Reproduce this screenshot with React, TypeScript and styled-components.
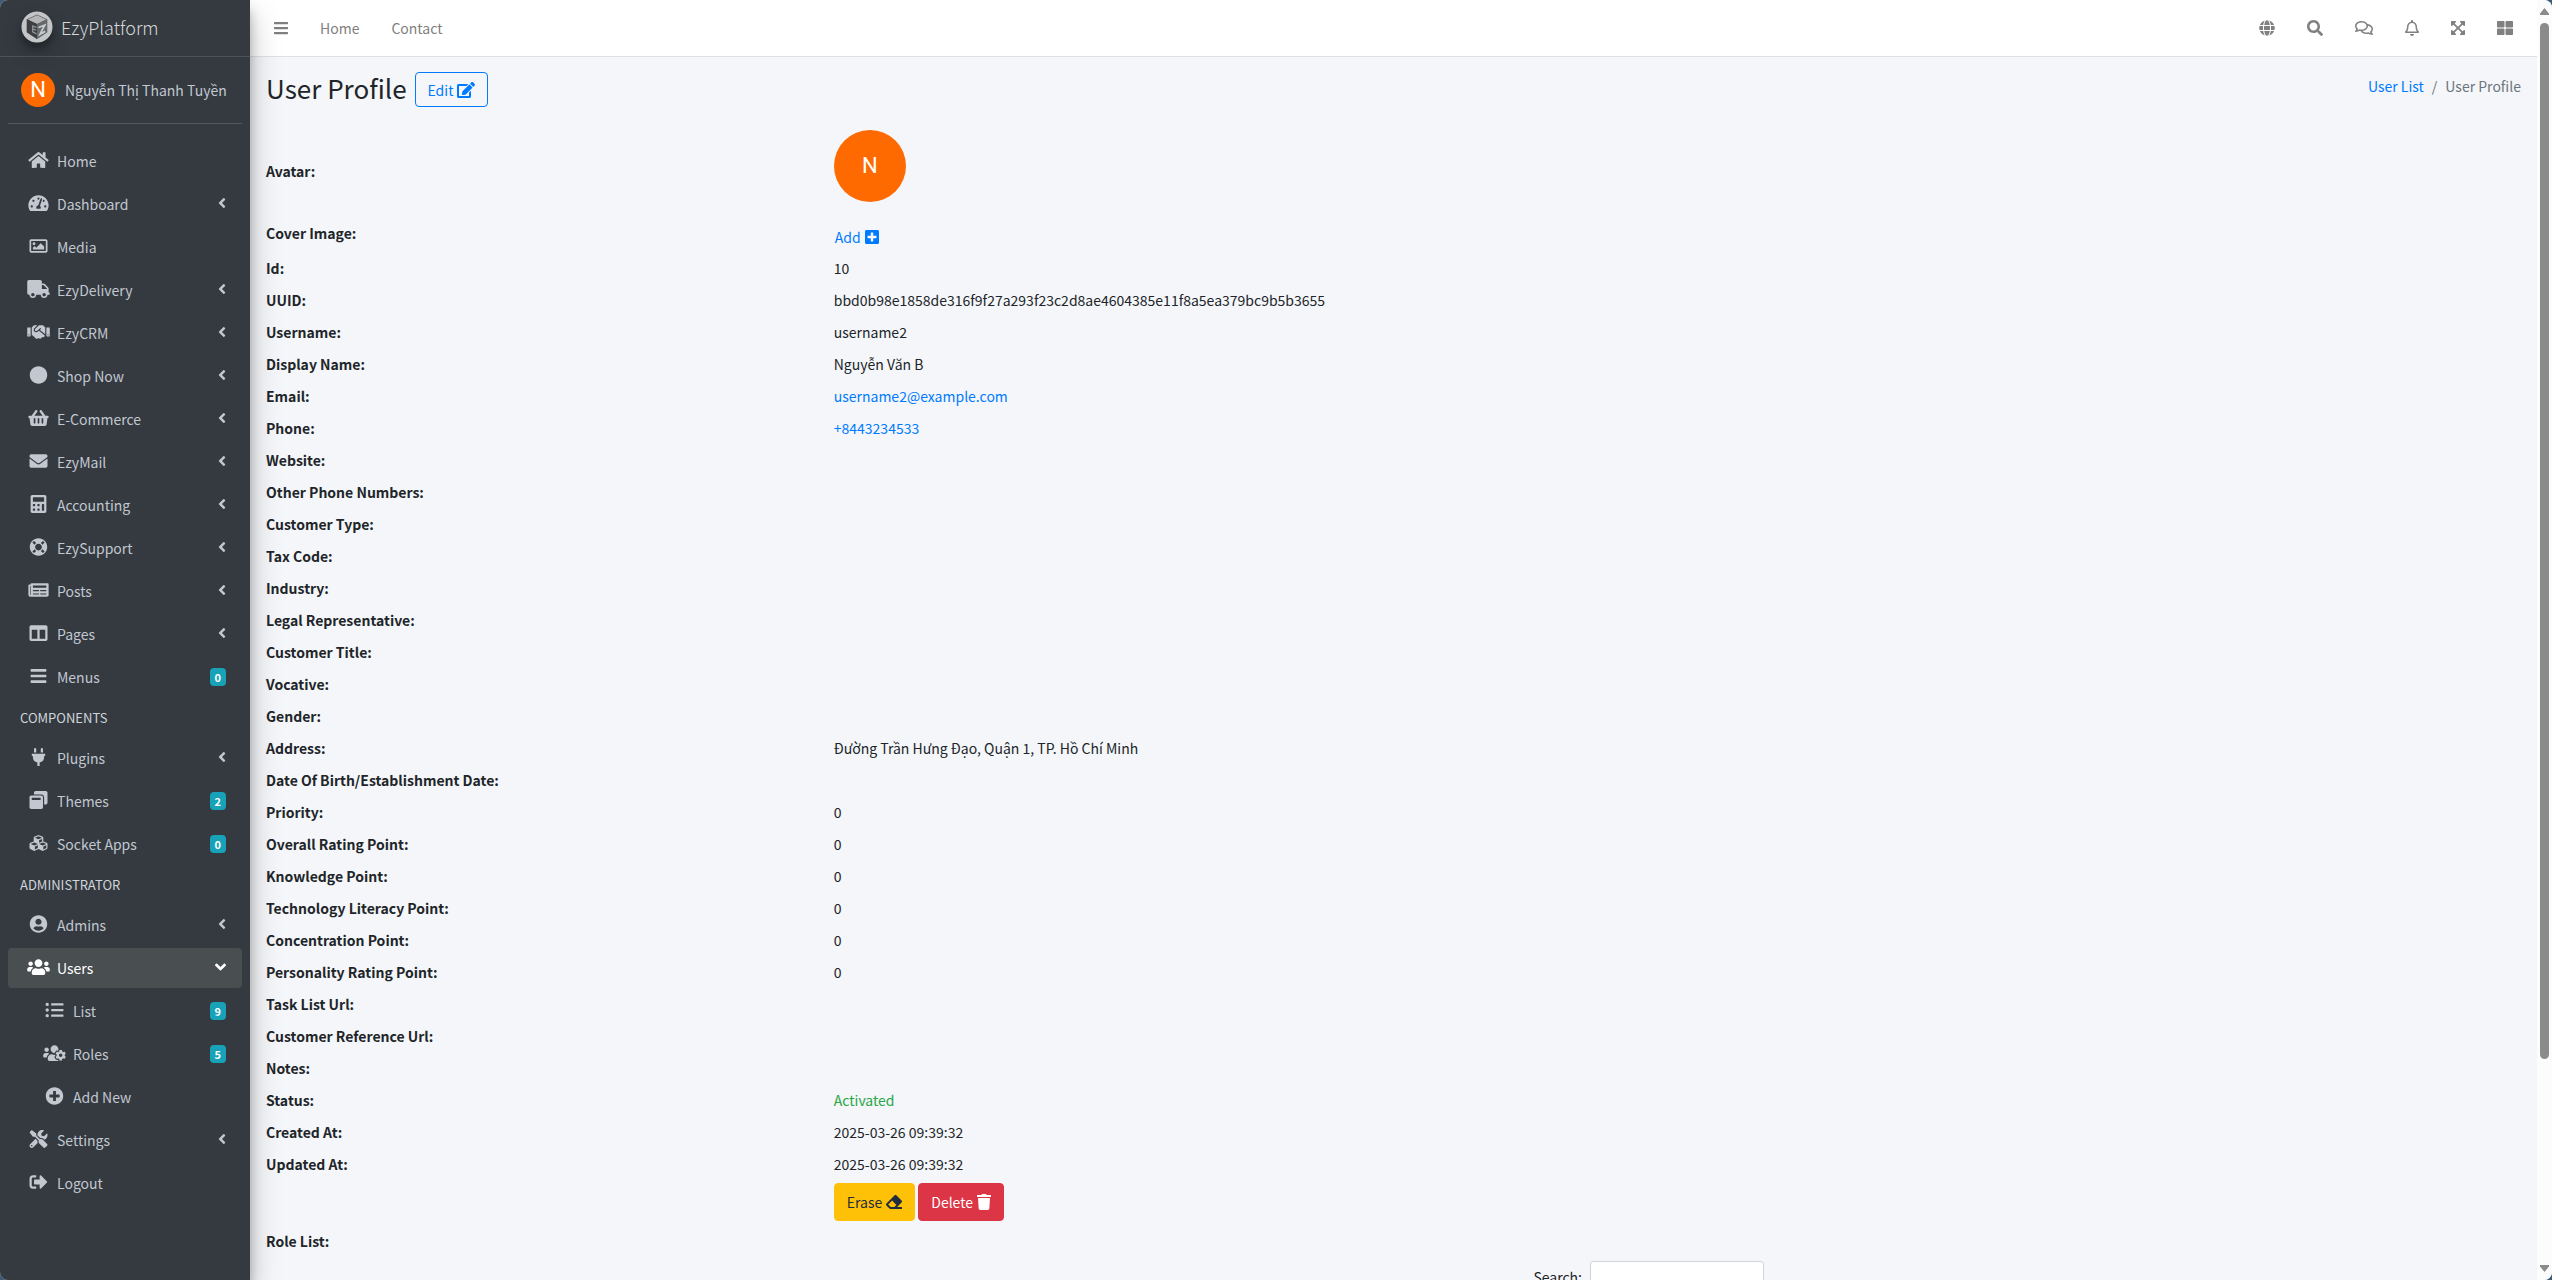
import React from "react";
import styled, { createGlobalStyle, css } from "styled-components";
import {
  FaAngleDown,
  FaAngleLeft,
  FaBars,
  FaCalculator,
  FaCircle,
  FaColumns,
  FaCubes,
  FaEdit,
  FaEnvelope,
  FaEraser,
  FaExpandArrowsAlt,
  FaGlobe,
  FaHandshake,
  FaHome,
  FaLifeRing,
  FaListUl,
  FaNewspaper,
  FaPlug,
  FaPlusCircle,
  FaPlusSquare,
  FaRegBell,
  FaRegComments,
  FaRegImage,
  FaSearch,
  FaShoppingBasket,
  FaSignOutAlt,
  FaTachometerAlt,
  FaThLarge,
  FaTools,
  FaTrash,
  FaTruck,
  FaUserCircle,
  FaUsers,
  FaUsersCog,
  FaWindowRestore,
} from "react-icons/fa";
import type { IconType } from "react-icons";

const GlobalStyle = createGlobalStyle`
  *, *::before, *::after { box-sizing: border-box; }
  body {
    margin: 0;
    background: #3f5a76;
    color: #212529;
    font-family: "Noto Sans CJK SC", "Noto Sans", sans-serif;
    font-size: 14px;
    line-height: 24px;
  }
  a { color: #007bff; text-decoration: none; }
  button, input { font: inherit; }
  svg { display: block; flex: none; }
`;

const Window = styled.div`
  display: flex;
  height: 100vh;
  overflow: hidden;
  border-radius: 8px;
  background: #f4f6f9;
`;

/* ---------- Sidebar ---------- */

const Sidebar = styled.aside`
  position: relative;
  z-index: 2;
  flex: none;
  width: 250px;
  background: #343a40;
  box-shadow: 0 14px 28px rgba(0, 0, 0, 0.25), 0 10px 10px rgba(0, 0, 0, 0.22);
`;

const Brand = styled.a`
  display: flex;
  align-items: center;
  gap: 8px;
  height: 57px;
  padding: 0 21px 3px;
  border-bottom: 1px solid #4b545c;
  color: #d6d8d9;
  font-size: 18px;
  font-weight: 300;

  svg {
    border-radius: 50%;
    box-shadow: 0 10px 20px rgba(0, 0, 0, 0.19), 0 6px 6px rgba(0, 0, 0, 0.23);
  }
`;

const UserPanel = styled.div`
  display: flex;
  align-items: center;
  gap: 10px;
  height: 67px;
  margin: 0 8px;
  padding: 0 13px;
  border-bottom: 1px solid #4f5962;

  a {
    color: #c2c7d0;
    white-space: nowrap;
  }
`;

const Avatar = styled.span<{ $size: number }>`
  display: flex;
  flex: none;
  align-items: center;
  justify-content: center;
  width: ${(p) => p.$size}px;
  height: ${(p) => p.$size}px;
  border-radius: 50%;
  background: #ff6a00;
  color: #fff;
  font-family: Roboto, sans-serif;
  font-size: 22px;
`;

const Menu = styled.ul`
  display: flex;
  flex-direction: column;
  gap: 3px;
  margin: 0;
  padding: 17px 8px 0;
  list-style: none;
`;

const MenuHeader = styled.li`
  height: 35px;
  padding-left: 12px;
  color: #d0d4db;
  font-size: 13px;
  line-height: 35px;
`;

const MenuLink = styled.a<{ $active?: boolean; $nested?: boolean }>`
  display: flex;
  align-items: center;
  gap: 5px;
  height: 40px;
  padding: 0 16px 0 ${(p) => (p.$nested ? 32 : 16)}px;
  border-radius: 4px;
  color: #c2c7d0;
  ${(p) =>
    p.$active &&
    css`
      background: #494e51;
      color: #fff;
    `}
`;

const IconSlot = styled.span`
  display: flex;
  justify-content: center;
  width: 28px;
  padding-bottom: 2px;

  svg {
    width: 23px;
    height: 18px;
  }
`;

const MenuText = styled.span`
  flex: 1;
`;

const Arrow = styled.span<{ $open?: boolean }>`
  padding-bottom: 2px;

  svg {
    width: ${(p) => (p.$open ? 11 : 8)}px;
    height: 18px;
  }
`;

const Badge = styled.span`
  padding: 0 5px;
  border-radius: 4px;
  background: #17a2b8;
  color: #fff;
  font-size: 11px;
  font-weight: 700;
  line-height: 18px;
`;

/* ---------- Main area ---------- */

const Main = styled.div`
  flex: 1;
  min-width: 0;
  overflow: hidden;
`;

const Navbar = styled.nav`
  display: flex;
  justify-content: space-between;
  height: 57px;
  padding: 0 8px;
  border-bottom: 1px solid #dee2e6;
  background: #fff;
`;

const NavGroup = styled.div`
  display: flex;
`;

const navItem = css`
  display: flex;
  align-items: center;
  padding: 0 16px;
  border: 0;
  background: none;
  color: #808080;
`;

const NavLink = styled.a`
  ${navItem}
`;

const NavButton = styled.button<{ $icon: number }>`
  ${navItem}

  svg {
    width: ${(p) => p.$icon}px;
    height: 16px;
  }
`;

const Content = styled.main`
  padding: 0 8px;
`;

const PageHeader = styled.header`
  display: flex;
  justify-content: space-between;
  padding: 15px 8px 0;
  height: 68px;
`;

const TitleGroup = styled.div`
  display: flex;
  align-items: center;
  gap: 8px;
  height: 35px;
`;

const Title = styled.h1`
  margin: 0;
  padding-bottom: 3px;
  font-size: 26px;
  font-weight: 400;
  line-height: 32px;
`;

const Breadcrumb = styled.ol`
  display: flex;
  gap: 8px;
  height: 24px;
  margin: 2px 0 0;
  padding: 0;
  color: #6c757d;
  list-style: none;

  li + li::before {
    content: "/";
    padding-right: 8px;
  }
`;

type Tone = "outline" | "warning" | "danger" | "link";

const tones = {
  outline: css`
    height: 35px;
    padding: 0 12px;
    border-color: #007bff;
    color: #007bff;
  `,
  warning: css`
    background: #ffc107;
    border-color: #ffc107;
    color: #1f2d3d;
  `,
  danger: css`
    background: #dc3545;
    border-color: #dc3545;
    color: #fff;
  `,
  link: css`
    height: 28px;
    padding: 4px 0 0;
    color: #007bff;
  `,
};

const Button = styled.button<{ $tone: Tone; $icon: number }>`
  display: inline-flex;
  align-items: center;
  gap: 4px;
  height: 38px;
  padding: 0 12px;
  border: 1px solid transparent;
  border-radius: 4px;
  background: none;
  ${(p) => tones[p.$tone]}

  svg {
    width: ${(p) => p.$icon}px;
    height: 16px;
  }
`;

const Details = styled.dl`
  margin: 0;
`;

const Row = styled.div<{ $height?: number }>`
  display: grid;
  grid-template-columns: 1fr 3fr;
  height: ${(p) => p.$height ?? 32}px;
  line-height: 32px;
`;

const Term = styled.dt<{ $center?: boolean }>`
  align-self: ${(p) => (p.$center ? "center" : "start")};
  padding: 0 8px;
  font-weight: 700;
`;

const Value = styled.dd<{ $top?: number; $success?: boolean }>`
  display: flex;
  align-items: flex-start;
  gap: 3px;
  margin: 0;
  padding: ${(p) => p.$top ?? 0}px 8px 0;
  color: ${(p) => (p.$success ? "#28a745" : "inherit")};
`;

const RoleHeading = styled.h2`
  margin: 0;
  padding: 0 8px;
  font-size: 14px;
  font-weight: 700;
  line-height: 32px;
`;

const SearchBar = styled.div`
  display: flex;
  justify-content: flex-end;
  width: calc(100% * 2 / 3);
  padding: 4px 8px 0;

  label {
    display: flex;
    align-items: center;
    gap: 8px;
  }
`;

const SearchInput = styled.input`
  width: 174px;
  height: 31px;
  padding: 4px 8px;
  border: 1px solid #ced4da;
  border-radius: 3px;
  background: #fff;
`;

/* ---------- Scroll bar ---------- */

const ScrollTrack = styled.div`
  display: flex;
  flex: none;
  flex-direction: column;
  align-items: center;
  justify-content: space-between;
  width: 15px;
  padding: 8px 0;
  background: #fcfcfc;
`;

const ScrollThumb = styled.span`
  flex: 0 1 82%;
  width: 9px;
  margin: 8px 0 auto;
  border-radius: 5px;
  background: #8b8b8b;
`;

type Item = {
  label: string;
  icon: IconType;
  tail?: "arrow" | "open" | number;
  nested?: boolean;
};

const mainItems: Item[] = [
  { label: "Home", icon: FaHome },
  { label: "Dashboard", icon: FaTachometerAlt, tail: "arrow" },
  { label: "Media", icon: FaRegImage },
  { label: "EzyDelivery", icon: FaTruck, tail: "arrow" },
  { label: "EzyCRM", icon: FaHandshake, tail: "arrow" },
  { label: "Shop Now", icon: FaCircle, tail: "arrow" },
  { label: "E-Commerce", icon: FaShoppingBasket, tail: "arrow" },
  { label: "EzyMail", icon: FaEnvelope, tail: "arrow" },
  { label: "Accounting", icon: FaCalculator, tail: "arrow" },
  { label: "EzySupport", icon: FaLifeRing, tail: "arrow" },
  { label: "Posts", icon: FaNewspaper, tail: "arrow" },
  { label: "Pages", icon: FaColumns, tail: "arrow" },
  { label: "Menus", icon: FaBars, tail: 0 },
];

const componentItems: Item[] = [
  { label: "Plugins", icon: FaPlug, tail: "arrow" },
  { label: "Themes", icon: FaWindowRestore, tail: 2 },
  { label: "Socket Apps", icon: FaCubes, tail: 0 },
];

const adminItems: Item[] = [
  { label: "Admins", icon: FaUserCircle, tail: "arrow" },
  { label: "Users", icon: FaUsers, tail: "open" },
  { label: "List", icon: FaListUl, tail: 9, nested: true },
  { label: "Roles", icon: FaUsersCog, tail: 5, nested: true },
  { label: "Add New", icon: FaPlusCircle, nested: true },
  { label: "Settings", icon: FaTools, tail: "arrow" },
  { label: "Logout", icon: FaSignOutAlt },
];

const details: { term: string; value?: React.ReactNode; success?: boolean }[] = [
  { term: "Id:", value: "10" },
  { term: "UUID:", value: "bbd0b98e1858de316f9f27a293f23c2d8ae4604385e11f8a5ea379bc9b5b3655" },
  { term: "Username:", value: "username2" },
  { term: "Display Name:", value: "Nguyễn Văn B" },
  { term: "Email:", value: <a href="mailto:username2@example.com">username2@example.com</a> },
  { term: "Phone:", value: <a href="tel:+8443234533">+8443234533</a> },
  { term: "Website:" },
  { term: "Other Phone Numbers:" },
  { term: "Customer Type:" },
  { term: "Tax Code:" },
  { term: "Industry:" },
  { term: "Legal Representative:" },
  { term: "Customer Title:" },
  { term: "Vocative:" },
  { term: "Gender:" },
  { term: "Address:", value: "Đường Trần Hưng Đạo, Quận 1, TP. Hồ Chí Minh" },
  { term: "Date Of Birth/Establishment Date:" },
  { term: "Priority:", value: "0" },
  { term: "Overall Rating Point:", value: "0" },
  { term: "Knowledge Point:", value: "0" },
  { term: "Technology Literacy Point:", value: "0" },
  { term: "Concentration Point:", value: "0" },
  { term: "Personality Rating Point:", value: "0" },
  { term: "Task List Url:" },
  { term: "Customer Reference Url:" },
  { term: "Notes:" },
  { term: "Status:", value: "Activated", success: true },
  { term: "Created At:", value: "2025-03-26 09:39:32" },
  { term: "Updated At:", value: "2025-03-26 09:39:32" },
];

function Logo() {
  return (
    <svg width="32" height="32" viewBox="0 0 33 33" aria-hidden="true">
      <circle cx="16.5" cy="16.5" r="16" fill="#c4c5c6" />
      <path d="M16.5 3.5 27 8.5v13.5l-10.5 7L6 22V8.5z" fill="#5b5e60" />
      <path d="M16.5 4.5 26 8.7l-9.5 4.6L7 8.7z" fill="#b4b6b7" />
      <path d="M6 8.5l10.5 5V29L6 22z" fill="#3c3f42" />
      <path d="M16.5 13.5 27 8.500V22l-10.500 7z" fill="#66696b" />
      <path d="M16 17l-4-1.500v6l4 2M12 18.500l3.500 1.200" fill="none" stroke="#8d9092" strokeWidth="1.400" />
      <path d="M18 17l6.500-2.500-5 9.500 5.500-3" fill="none" stroke="#c9cacb" strokeWidth="1.800" />
    </svg>
  );
}

function MenuItem({ item }: { item: Item }) {
  const Icon = item.icon;
  return (
    <li>
      <MenuLink href="#" $active={item.tail === "open"} $nested={item.nested}>
        <IconSlot>
          <Icon />
        </IconSlot>
        <MenuText>{item.label}</MenuText>
        {item.tail === "arrow" && <Arrow><FaAngleLeft /></Arrow>}
        {item.tail === "open" && <Arrow $open><FaAngleDown /></Arrow>}
        {typeof item.tail === "number" && <Badge>{item.tail}</Badge>}
      </MenuLink>
    </li>
  );
}

export default function App() {
  return (
    <>
      <GlobalStyle />
      <Window>
        <Sidebar>
          <Brand href="#">
            <Logo />
            EzyPlatform
          </Brand>
          <UserPanel>
            <Avatar $size={34}>N</Avatar>
            <a href="#">Nguyễn Thị Thanh Tuyền</a>
          </UserPanel>
          <nav>
            <Menu>
              {mainItems.map((item) => <MenuItem key={item.label} item={item} />)}
              <MenuHeader>COMPONENTS</MenuHeader>
              {componentItems.map((item) => <MenuItem key={item.label} item={item} />)}
              <MenuHeader>ADMINISTRATOR</MenuHeader>
              {adminItems.map((item) => <MenuItem key={item.label} item={item} />)}
            </Menu>
          </nav>
        </Sidebar>

        <Main>
          <Navbar>
            <NavGroup>
              <NavButton $icon={14} aria-label="Toggle sidebar"><FaBars /></NavButton>
              <NavLink href="#">Home</NavLink>
              <NavLink href="#">Contact</NavLink>
            </NavGroup>
            <NavGroup>
              <NavButton $icon={16} aria-label="Language"><FaGlobe /></NavButton>
              <NavButton $icon={16} aria-label="Search"><FaSearch /></NavButton>
              <NavButton $icon={18} aria-label="Messages"><FaRegComments /></NavButton>
              <NavButton $icon={14} aria-label="Notifications"><FaRegBell /></NavButton>
              <NavButton $icon={14} aria-label="Full screen"><FaExpandArrowsAlt /></NavButton>
              <NavButton $icon={16} aria-label="Apps"><FaThLarge /></NavButton>
            </NavGroup>
          </Navbar>

          <Content>
            <PageHeader>
              <TitleGroup>
                <Title>User Profile</Title>
                <Button $tone="outline" $icon={18}>Edit <FaEdit /></Button>
              </TitleGroup>
              <Breadcrumb>
                <li><a href="#">User List</a></li>
                <li>User Profile</li>
              </Breadcrumb>
            </PageHeader>

            <Details>
              <Row $height={92}>
                <Term $center>Avatar:</Term>
                <Value $top={5}><Avatar $size={72}>N</Avatar></Value>
              </Row>
              <Row $height={35}>
                <Term>Cover Image:</Term>
                <Value $top={4}><Button $tone="link" $icon={14}>Add <FaPlusSquare /></Button></Value>
              </Row>
              {details.map((d) => (
                <Row key={d.term}>
                  <Term>{d.term}</Term>
                  <Value $success={d.success}>{d.value}</Value>
                </Row>
              ))}
              <Row $height={45}>
                <Term />
                <Value $top={3}>
                  <Button $tone="warning" $icon={16}>Erase <FaEraser /></Button>
                  <Button $tone="danger" $icon={14}>Delete <FaTrash /></Button>
                </Value>
              </Row>
            </Details>

            <RoleHeading>Role List:</RoleHeading>
            <SearchBar>
              <label>
                Search:
                <SearchInput type="search" />
              </label>
            </SearchBar>
          </Content>
        </Main>

        <ScrollTrack aria-hidden="true">
          <svg width="9" height="7" viewBox="0 0 9 7"><path d="M4.500 0 9 5.500V7H0V5.500z" fill="#8b8b8b" /></svg>
          <ScrollThumb />
          <svg width="9" height="7" viewBox="0 0 9 7"><path d="M4.500 7 9 1.500V0H0v1.500z" fill="#8b8b8b" /></svg>
        </ScrollTrack>
      </Window>
    </>
  );
}
